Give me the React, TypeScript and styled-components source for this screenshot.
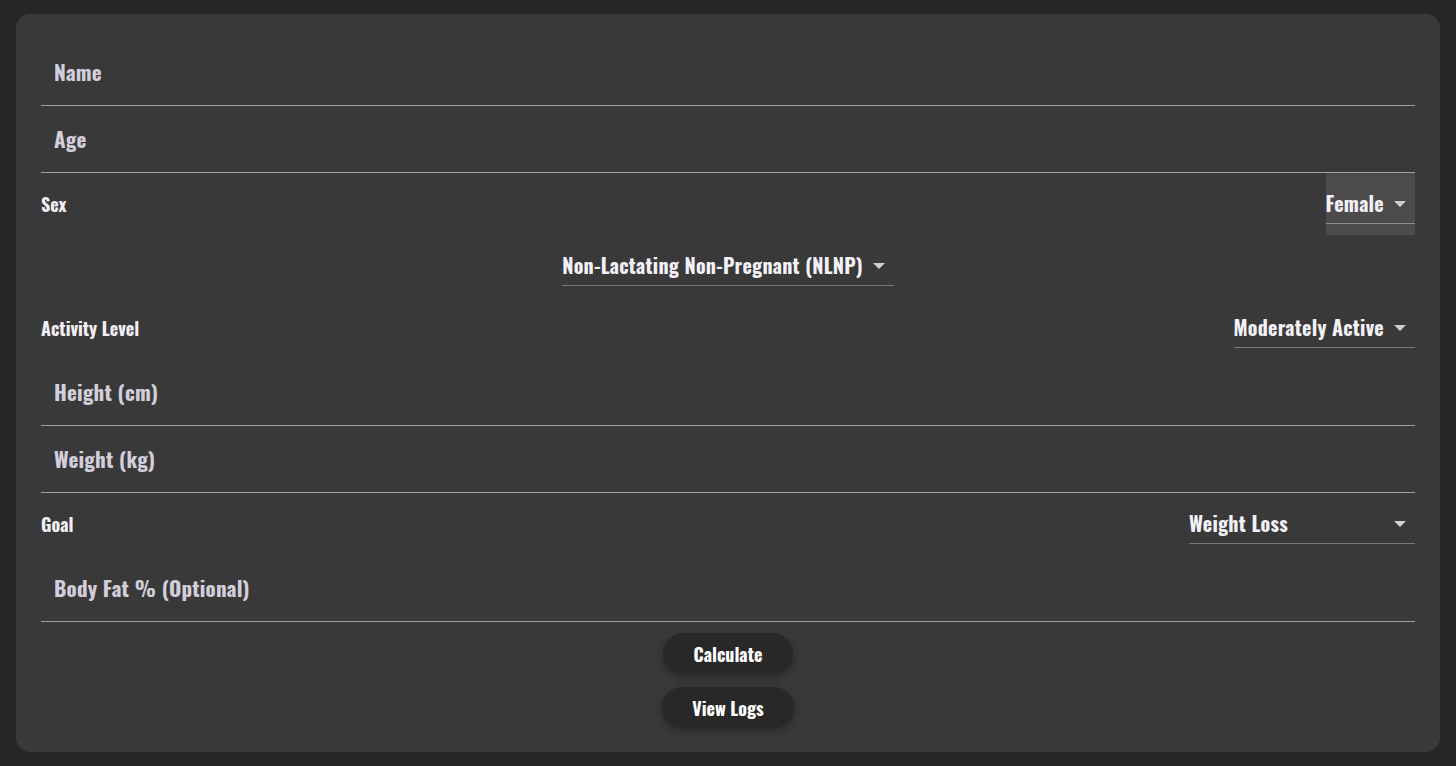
import React from "react";
import styled, { createGlobalStyle } from "styled-components";

const GlobalStyle = createGlobalStyle`
  html, body { margin: 0; padding: 0; background: #262626; }
  body { font-family: "Oswald", "Roboto Condensed", "Liberation Sans Narrow", sans-serif; }
  * { box-sizing: border-box; }
`;

const Page = styled.div`
  padding: 14px 16px;
  min-height: 766px;
`;

const Card = styled.form`
  background: #393939;
  border-radius: 14px;
  padding: 25px 25px 24px;
  display: flex;
  flex-direction: column;
`;

const Field = styled.div`
  height: 67px;
  border-bottom: 1px solid #a39eab;
  display: flex;
  align-items: center;
  padding: 0 13px 1px;
`;

const FieldLabel = styled.span`
  font-size: 21px;
  font-weight: 700;
  color: #d3cedb;
  letter-spacing: 0.2px;
`;

const SelectRow = styled.div<{ $center?: boolean }>`
  display: flex;
  align-items: center;
  justify-content: ${(p) => (p.$center ? "center" : "space-between")};
  padding: 11px 0;
`;

const RowLabel = styled.span`
  font-size: 18px;
  font-weight: 700;
  color: #f1eff3;
`;

const SelectWrap = styled.div<{ $active?: boolean }>`
  background: ${(p) => (p.$active ? "#4b4b4b" : "transparent")};
  margin: ${(p) => (p.$active ? "-11px 0" : "0")};
  padding: ${(p) => (p.$active ? "11px 0" : "0")};
`;

const Select = styled.div<{ $min?: number; $underline?: string }>`
  display: flex;
  align-items: center;
  justify-content: space-between;
  gap: 10px;
  min-width: ${(p) => (p.$min ? `${p.$min}px` : "0")};
  height: 40px;
  padding: 0 9px 1px 0;
  border-bottom: 1px solid ${(p) => p.$underline ?? "#787878"};
  cursor: pointer;
`;

const SelectText = styled.span`
  font-size: 20px;
  font-weight: 700;
  color: #f3f0f6;
  letter-spacing: 0.25px;
  line-height: 28px;
`;

const Arrow = styled.span`
  width: 0;
  height: 0;
  border-left: 6px solid transparent;
  border-right: 6px solid transparent;
  border-top: 6px solid #d0d0d0;
  margin-top: 1px;
`;

const Buttons = styled.div`
  display: flex;
  flex-direction: column;
  align-items: center;
  gap: 13px;
  margin-top: 11px;
`;

const Button = styled.button<{ $px: number }>`
  height: 41px;
  padding: 0 ${(p) => p.$px}px;
  border: none;
  border-radius: 21px;
  background: #282828;
  color: #ffffff;
  font-family: inherit;
  font-size: 18px;
  font-weight: 700;
  box-shadow: 0 3px 8px rgba(0, 0, 0, 0.28);
  cursor: pointer;
`;

function Dropdown({
  value,
  min,
  active,
  underline,
}: {
  value: string;
  min?: number;
  active?: boolean;
  underline?: string;
}) {
  return (
    <SelectWrap $active={active}>
      <Select $min={min} $underline={underline}>
        <SelectText>{value}</SelectText>
        <Arrow />
      </Select>
    </SelectWrap>
  );
}

export default function App() {
  return (
    <>
      <GlobalStyle />
      <Page>
        <Card onSubmit={(e) => e.preventDefault()}>
          <Field>
            <FieldLabel>Name</FieldLabel>
          </Field>
          <Field>
            <FieldLabel>Age</FieldLabel>
          </Field>
          <SelectRow>
            <RowLabel>Sex</RowLabel>
            <Dropdown value="Female" active underline="#8d8d8d" />
          </SelectRow>
          <SelectRow $center>
            <Dropdown value="Non-Lactating Non-Pregnant (NLNP)" />
          </SelectRow>
          <SelectRow>
            <RowLabel>Activity Level</RowLabel>
            <Dropdown value="Moderately Active" />
          </SelectRow>
          <Field>
            <FieldLabel>Height (cm)</FieldLabel>
          </Field>
          <Field>
            <FieldLabel>Weight (kg)</FieldLabel>
          </Field>
          <SelectRow>
            <RowLabel>Goal</RowLabel>
            <Dropdown value="Weight Loss" min={226} />
          </SelectRow>
          <Field>
            <FieldLabel>Body Fat % (Optional)</FieldLabel>
          </Field>
          <Buttons>
            <Button type="submit" $px={31}>Calculate</Button>
            <Button type="button" $px={30}>View Logs</Button>
          </Buttons>
        </Card>
      </Page>
    </>
  );
}
